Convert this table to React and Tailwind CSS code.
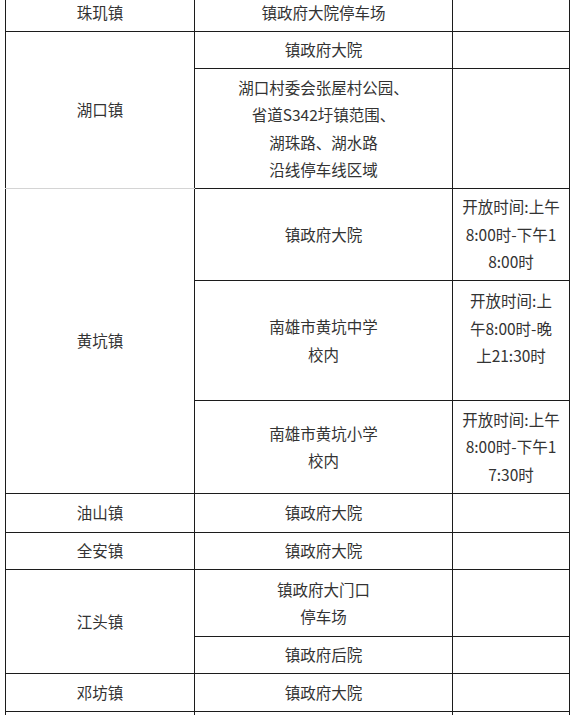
import React from "react";

const line = "border border-[#1c1c1c]";

const Cell = ({ children, className = "", ...rest }) => (
  <td
    className={`${line} text-center align-middle p-0 ${className}`}
    {...rest}
  >
    {children}
  </td>
);

const App = () => {
  return (
    <div
      className="h-[715px] w-[571px] overflow-hidden bg-white text-[#333] text-[15.5px] leading-[27.5px]"
      style={{ fontFamily: '"Noto Sans CJK SC", "Noto Sans", sans-serif' }}
    >
      <table className="ml-[5px] -mt-[7px] table-fixed border-collapse w-[564px]">
        <colgroup>
          <col className="w-[189px]" />
          <col className="w-[258px]" />
          <col className="w-[117px]" />
        </colgroup>
        <tbody>
          {/* 珠玑镇 */}
          <tr className="h-[38px]">
            <Cell>珠玑镇</Cell>
            <Cell>镇政府大院停车场</Cell>
            <Cell />
          </tr>

          {/* 湖口镇 */}
          <tr className="h-[37px]">
            <Cell rowSpan={2} className="border-b-[#d4d4d4]">
              湖口镇
            </Cell>
            <Cell>镇政府大院</Cell>
            <Cell />
          </tr>
          <tr className="h-[120px]">
            <Cell>
              湖口村委会张屋村公园、
              <br />
              省道S342圩镇范围、
              <br />
              湖珠路、湖水路
              <br />
              沿线停车线区域
            </Cell>
            <Cell />
          </tr>

          {/* 黄坑镇 */}
          <tr className="h-[92px]">
            <Cell rowSpan={3}>黄坑镇</Cell>
            <Cell>镇政府大院</Cell>
            <Cell className="whitespace-nowrap">
              开放时间:上午
              <br />
              8:00时-下午1
              <br />
              8:00时
            </Cell>
          </tr>
          <tr className="h-[120px]">
            <Cell>
              南雄市黄坑中学
              <br />
              校内
            </Cell>
            <Cell className="whitespace-nowrap pb-[24px]">
              开放时间:上
              <br />
              午8:00时-晚
              <br />
              上21:30时
            </Cell>
          </tr>
          <tr className="h-[93px]">
            <Cell>
              南雄市黄坑小学
              <br />
              校内
            </Cell>
            <Cell className="whitespace-nowrap">
              开放时间:上午
              <br />
              8:00时-下午1
              <br />
              7:30时
            </Cell>
          </tr>

          {/* 油山镇 / 全安镇 */}
          <tr className="h-[39px]">
            <Cell>油山镇</Cell>
            <Cell>镇政府大院</Cell>
            <Cell />
          </tr>
          <tr className="h-[37px]">
            <Cell>全安镇</Cell>
            <Cell>镇政府大院</Cell>
            <Cell />
          </tr>

          {/* 江头镇 */}
          <tr className="h-[67px]">
            <Cell rowSpan={2}>江头镇</Cell>
            <Cell>
              镇政府大门口
              <br />
              停车场
            </Cell>
            <Cell />
          </tr>
          <tr className="h-[37px]">
            <Cell>镇政府后院</Cell>
            <Cell />
          </tr>

          {/* 邓坊镇 */}
          <tr className="h-[38px]">
            <Cell>邓坊镇</Cell>
            <Cell>镇政府大院</Cell>
            <Cell />
          </tr>
          <tr className="h-[38px]">
            <Cell />
            <Cell />
            <Cell />
          </tr>
        </tbody>
      </table>
    </div>
  );
};

export default App;
